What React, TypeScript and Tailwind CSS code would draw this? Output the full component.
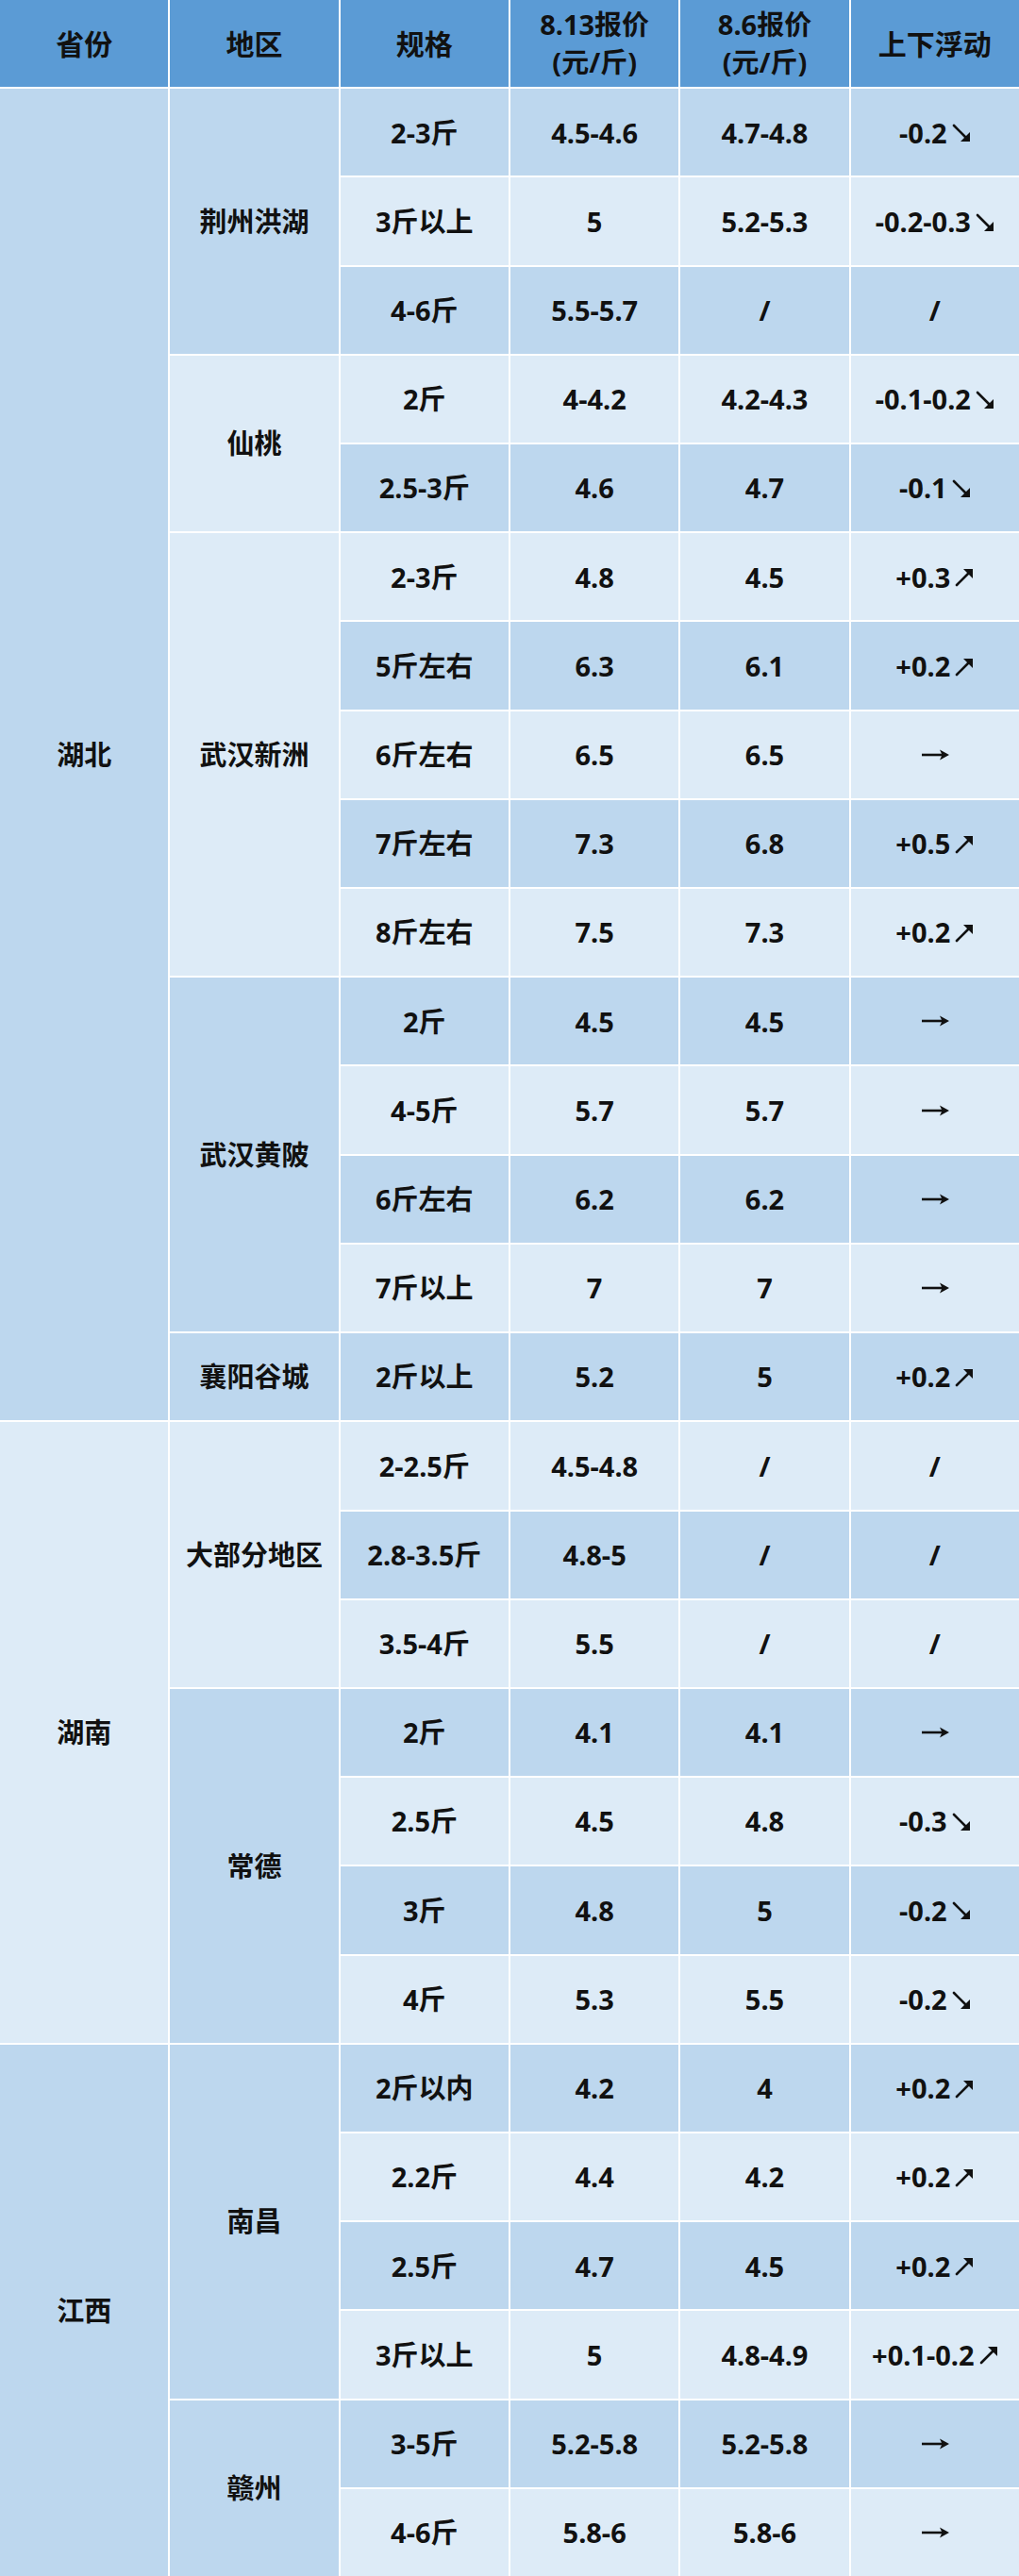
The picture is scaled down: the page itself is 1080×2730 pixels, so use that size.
import React from "react";

type Row = [string, string, string, string];

interface Region {
  name: string;
  rows: Row[];
}

interface Province {
  name: string;
  regions: Region[];
}

const data: Province[] = [
  {
    name: "湖北",
    regions: [
      {
        name: "荆州洪湖",
        rows: [
          ["2-3斤", "4.5-4.6", "4.7-4.8", "-0.2↘"],
          ["3斤以上", "5", "5.2-5.3", "-0.2-0.3↘"],
          ["4-6斤", "5.5-5.7", "/", "/"],
        ],
      },
      {
        name: "仙桃",
        rows: [
          ["2斤", "4-4.2", "4.2-4.3", "-0.1-0.2↘"],
          ["2.5-3斤", "4.6", "4.7", "-0.1↘"],
        ],
      },
      {
        name: "武汉新洲",
        rows: [
          ["2-3斤", "4.8", "4.5", "+0.3↗"],
          ["5斤左右", "6.3", "6.1", "+0.2↗"],
          ["6斤左右", "6.5", "6.5", "→"],
          ["7斤左右", "7.3", "6.8", "+0.5↗"],
          ["8斤左右", "7.5", "7.3", "+0.2↗"],
        ],
      },
      {
        name: "武汉黄陂",
        rows: [
          ["2斤", "4.5", "4.5", "→"],
          ["4-5斤", "5.7", "5.7", "→"],
          ["6斤左右", "6.2", "6.2", "→"],
          ["7斤以上", "7", "7", "→"],
        ],
      },
      {
        name: "襄阳谷城",
        rows: [["2斤以上", "5.2", "5", "+0.2↗"]],
      },
    ],
  },
  {
    name: "湖南",
    regions: [
      {
        name: "大部分地区",
        rows: [
          ["2-2.5斤", "4.5-4.8", "/", "/"],
          ["2.8-3.5斤", "4.8-5", "/", "/"],
          ["3.5-4斤", "5.5", "/", "/"],
        ],
      },
      {
        name: "常德",
        rows: [
          ["2斤", "4.1", "4.1", "→"],
          ["2.5斤", "4.5", "4.8", "-0.3↘"],
          ["3斤", "4.8", "5", "-0.2↘"],
          ["4斤", "5.3", "5.5", "-0.2↘"],
        ],
      },
    ],
  },
  {
    name: "江西",
    regions: [
      {
        name: "南昌",
        rows: [
          ["2斤以内", "4.2", "4", "+0.2↗"],
          ["2.2斤", "4.4", "4.2", "+0.2↗"],
          ["2.5斤", "4.7", "4.5", "+0.2↗"],
          ["3斤以上", "5", "4.8-4.9", "+0.1-0.2↗"],
        ],
      },
      {
        name: "赣州",
        rows: [
          ["3-5斤", "5.2-5.8", "5.2-5.8", "→"],
          ["4-6斤", "5.8-6", "5.8-6", "→"],
        ],
      },
    ],
  },
];

const spans: Record<number, string> = {
  1: "row-span-1",
  2: "row-span-2",
  3: "row-span-3",
  4: "row-span-4",
  5: "row-span-5",
  6: "row-span-6",
  7: "row-span-7",
  15: "row-span-15",
};

const DARK = "bg-[#bdd7ee]";
const LIGHT = "bg-[#ddebf7]";

const DownArrow = () => (
  <svg width="20" height="20" viewBox="0 0 20 20" className="ml-[5px] mt-[2px]">
    <line x1="2" y1="2" x2="15" y2="15" stroke="#111" strokeWidth="2.6" strokeLinecap="round" />
    <polygon points="19,19 19,9 9,19" fill="#111" />
  </svg>
);

const UpArrow = () => (
  <svg width="20" height="20" viewBox="0 0 20 20" className="ml-[5px] mt-[2px]">
    <line x1="2" y1="18" x2="15" y2="5" stroke="#111" strokeWidth="2.6" strokeLinecap="round" />
    <polygon points="19,1 19,11 9,1" fill="#111" />
  </svg>
);

const RightArrow = () => (
  <svg width="30" height="12" viewBox="0 0 30 12">
    <line x1="1" y1="6" x2="24" y2="6" stroke="#111" strokeWidth="2.6" />
    <polygon points="30,6 20,0.5 22.5,6 20,11.5" fill="#111" />
  </svg>
);

const Change: React.FC<{ value: string }> = ({ value }) => {
  const last = value.slice(-1);
  if (last === "↘" || last === "↗") {
    return (
      <span className="flex items-center">
        <span>{value.slice(0, -1)}</span>
        {last === "↘" ? <DownArrow /> : <UpArrow />}
      </span>
    );
  }
  if (value === "→") {
    return <RightArrow />;
  }
  return <span>{value}</span>;
};

const Cell: React.FC<{ className?: string; children: React.ReactNode }> = ({
  className = "",
  children,
}) => (
  <div className={`flex items-center justify-center text-center ${className}`}>{children}</div>
);

export default function App() {
  const cells: React.ReactNode[] = [];
  let rowIndex = 0;

  data.forEach((prov) => {
    const provRows = prov.regions.reduce((n, r) => n + r.rows.length, 0);
    cells.push(
      <Cell key={`p-${prov.name}`} className={`${spans[provRows]} ${rowIndex % 2 === 0 ? DARK : LIGHT}`}>
        {prov.name}
      </Cell>
    );
    prov.regions.forEach((region) => {
      cells.push(
        <Cell
          key={`r-${region.name}`}
          className={`${spans[region.rows.length]} ${rowIndex % 2 === 0 ? DARK : LIGHT}`}
        >
          {region.name}
        </Cell>
      );
      region.rows.forEach((row, i) => {
        const bg = rowIndex % 2 === 0 ? DARK : LIGHT;
        cells.push(
          <Cell key={`${region.name}-${i}-0`} className={bg}>{row[0]}</Cell>,
          <Cell key={`${region.name}-${i}-1`} className={bg}>{row[1]}</Cell>,
          <Cell key={`${region.name}-${i}-2`} className={bg}>{row[2]}</Cell>,
          <Cell key={`${region.name}-${i}-3`} className={bg}>
            <Change value={row[3]} />
          </Cell>
        );
        rowIndex++;
      });
    });
  });

  return (
    <div className="w-[1080px] h-[2730px] bg-white [font-family:'Noto_Sans','Noto_Sans_CJK_SC',sans-serif] text-[29px] font-bold text-[#111]">
      <div className="grid h-full grid-cols-6 grid-rows-[repeat(29,minmax(0,1fr))] gap-[2px]">
        <Cell className="bg-[#5b9bd5] text-[30px]">省份</Cell>
        <Cell className="bg-[#5b9bd5] text-[30px]">地区</Cell>
        <Cell className="bg-[#5b9bd5] text-[30px]">规格</Cell>
        <Cell className="bg-[#5b9bd5] flex-col leading-[40px]">
          <span>8.13报价</span>
          <span>(元/斤)</span>
        </Cell>
        <Cell className="bg-[#5b9bd5] flex-col leading-[40px]">
          <span>8.6报价</span>
          <span>(元/斤)</span>
        </Cell>
        <Cell className="bg-[#5b9bd5] text-[30px]">上下浮动</Cell>
        {cells}
      </div>
    </div>
  );
}
